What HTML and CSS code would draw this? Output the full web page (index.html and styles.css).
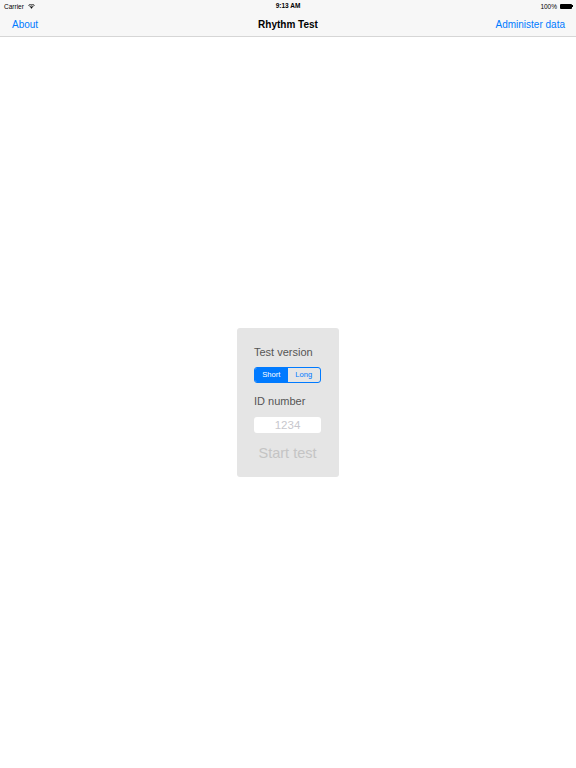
FILE: index.html
```html
<!DOCTYPE html>
<html>
<head>
<meta charset="utf-8">
<link rel="stylesheet" href="styles.css">
</head>
<body>
<div class="app">
  <header class="bar">
    <div class="status">
      <div class="status-left">
        <span>Carrier</span>
        <svg class="wifi" width="7" height="6" viewBox="0 0 14 11">
          <path d="M7 11 L4.6 8.3 A3.4 3.4 0 0 1 9.4 8.3 Z" fill="#000"/>
          <path d="M2.8 6.4 A6 6 0 0 1 11.2 6.4 L10.1 7.6 A4.4 4.4 0 0 0 3.9 7.6 Z" fill="#000"/>
          <path d="M0.6 4.1 A9 9 0 0 1 13.4 4.1 L12.3 5.3 A7.4 7.4 0 0 0 1.7 5.3 Z" fill="#000"/>
        </svg>
      </div>
      <div class="status-time">9:13 AM</div>
      <div class="status-right">
        <span>100%</span>
        <span class="battery"></span><span class="battery-tip"></span>
      </div>
    </div>
    <nav class="nav">
      <a class="nav-btn">About</a>
      <div class="nav-title">Rhythm Test</div>
      <a class="nav-btn">Administer data</a>
    </nav>
  </header>
  <main class="content">
    <section class="panel">
      <div class="label">Test version</div>
      <div class="segmented">
        <span class="seg seg-on">Short</span>
        <span class="seg">Long</span>
      </div>
      <div class="label label-id">ID number</div>
      <div class="field">1234</div>
      <div class="start">Start test</div>
    </section>
  </main>
</div>
</body>
</html>
```
FILE: styles.css
```css
* { box-sizing: border-box; }
html, body { margin: 0; padding: 0; background: #fff; }
body { font-family: "Liberation Sans", Arial, sans-serif; color: #000; }
.app { width: 576px; height: 768px; display: flex; flex-direction: column; }
.bar { background: #f7f7f7; border-bottom: 1px solid #d6d6d6; height: 37px; flex: none; }
.status { height: 12px; display: flex; align-items: center; justify-content: space-between; padding: 0 3px 0 4px; font-size: 6.5px; position: relative; }
.status-left { display: flex; align-items: center; gap: 4px; }
.status-time { position: absolute; left: 0; right: 0; text-align: center; font-weight: bold; font-size: 6.5px; top: 2px; }
.status-right { display: flex; align-items: center; }
.status-right span:first-child { margin-right: 3px; }
.battery { width: 12px; height: 5px; background: #000; border-radius: 1px; }
.battery-tip { width: 1px; height: 2px; background: #000; }
.nav { height: 24px; display: flex; align-items: center; justify-content: space-between; padding: 0 11px 0 12px; position: relative; font-size: 10px; }
.nav-btn { color: #007aff; }
.nav-title { position: absolute; left: 0; right: 0; text-align: center; font-weight: bold; font-size: 10px; pointer-events: none; }
.content { flex: 1; display: flex; align-items: center; justify-content: center; }
.panel { width: 102px; background: #e5e5e5; border-radius: 3px; padding: 18px 18px 15px 17px; margin-bottom: 1px; display: flex; flex-direction: column; }
.label { font-size: 11px; line-height: 13px; color: #555; }
.segmented { margin-top: 8px; height: 16px; border: 1px solid #007aff; border-radius: 3px; display: flex; overflow: hidden; }
.seg { flex: 1; display: flex; align-items: center; justify-content: center; font-size: 7.6px; color: #007aff; }
.seg-on { background: #007aff; color: #fff; }
.label-id { margin-top: 12px; }
.field { margin-top: 9px; height: 16px; background: #fff; border-radius: 3px; font-size: 11.5px; line-height: 16px; color: #c7c7cd; text-align: center; }
.start { margin-top: 12px; font-size: 14.5px; line-height: 17px; color: #c4c4c4; text-align: center; }
```
